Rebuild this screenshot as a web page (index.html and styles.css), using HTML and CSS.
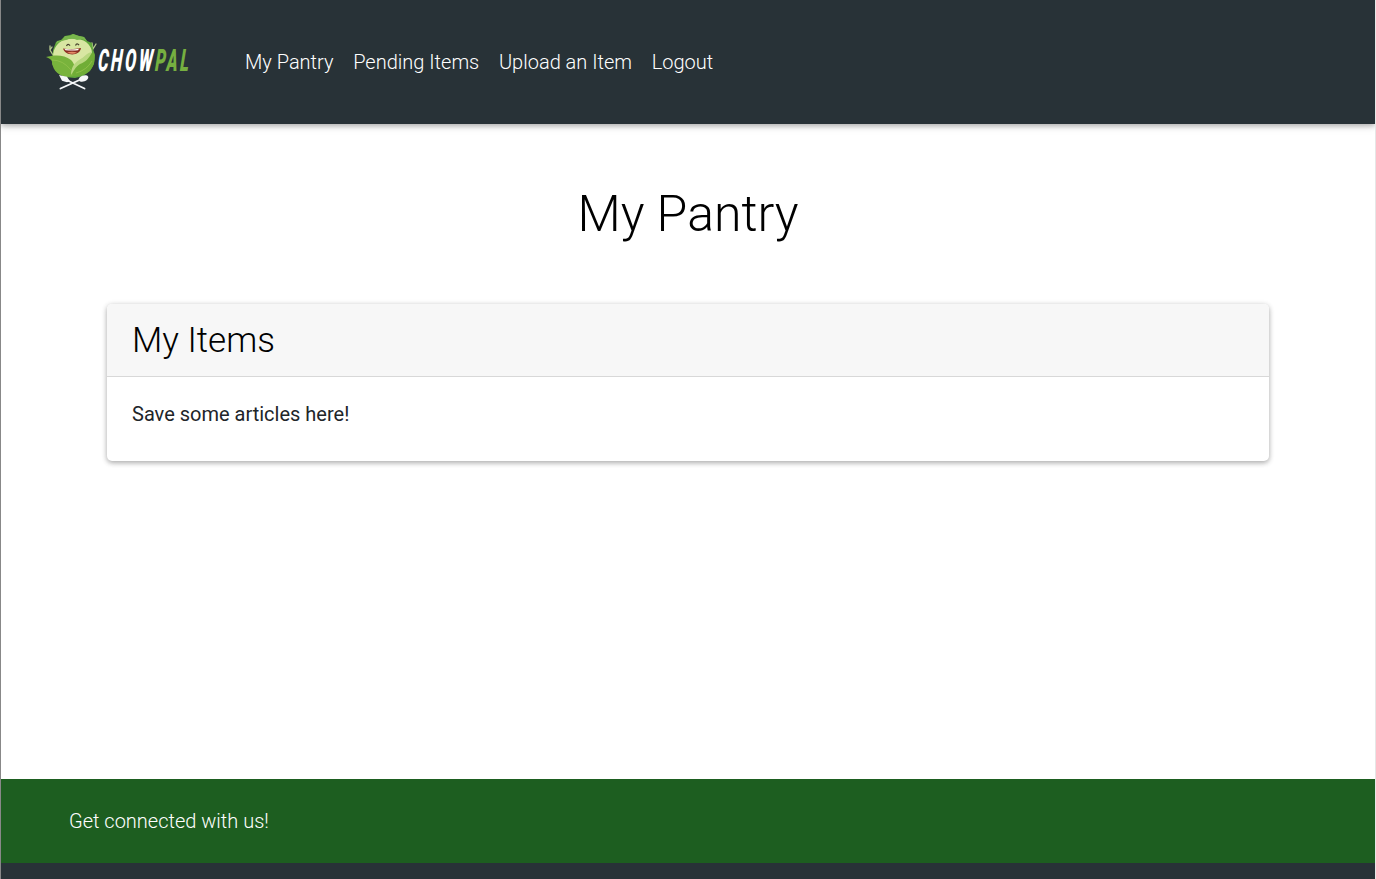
FILE: index.html
```html
<!DOCTYPE html>
<html lang="en">
<head>
<meta charset="utf-8">
<title>ChowPal - My Pantry</title>
<link rel="stylesheet" href="styles.css">
</head>
<body>
<div class="page">
  <header class="navbar">
    <a class="brand" aria-label="ChowPal">
      <svg class="logo" width="150" height="64" viewBox="42 30 150 64">
        <path d="M53 55L50 50L50 46M50 50L52 47M93 49L92 43M93 49L96 44" fill="none" stroke="#b5c98c" stroke-width="1.300" stroke-linecap="round"/>
        <path d="M53 50l3-8 5-2 4-4 5-1 3-1 6 2 5 1 3 4 5 2 1 6 2 6-1 9-4 7-7 5-8 2-10-1-8-5-5-8z" fill="#62a83c"/>
        <path d="M53 57c0-9 5-15 11-17 6-2 17-2 22 2 4 3 6 7 6 11l-10 8-10 8-18-6z" fill="#d8e6a2"/>
        <path d="M56 44l1-3 5-1 3-4 5 0 3-2 6 2 5 1 3 4-5-2-5 1-5-2-6 2-5 1z" fill="#79b64c"/>
        <path d="M46 57c7-2 18-3 25 3 4 4 5 9 2 16-10 3-20-3-21-14 0-2-3-4-6-5z" fill="#78b33c"/>
        <path d="M94 53c3 14-6 24-21 23-1-7 3-13 9-17 4-3 7-6 12-6z" fill="#70ad36"/>
        <path d="M71 75c0-7 3-12 8-15 6-3 7-7 13-8-3 7-7 10-12 12-5 3-6 7-9 11z" fill="#b9d780"/>
        <path d="M52 60q11 0 19 10M76 73q11-3 16-12" fill="none" stroke="#94c34c" stroke-width=".8"/>
        <path d="M63 48.500q9 1.500 18-.5c-1 8-15 9-18 .5z" fill="#8c2d22"/>
        <path d="M64.500 49q8 1 14.500-.3l-1 1.500q-6 .8-12.500 0z" fill="#fff"/>
        <path d="M67 52.500q5-1.500 10 0-4 2.500-10 0z" fill="#e28a66"/>
        <path d="M66.500 46q1.500-3 3.500-.3M75.500 45.500q1.500-3 3.500-.3" fill="none" stroke="#47432e" stroke-width="1.300"/>
        <path d="M60.500 88.500l19-8.500M84.500 88.500l-18-8.500" stroke="#f5f7f8" stroke-width="1.900" stroke-linecap="round"/>
        <ellipse cx="83.500" cy="78.500" rx="5" ry="3" transform="rotate(-20 83.500 78.500)" fill="#f5f7f8"/>
        <path d="M59 75l3 .8 5 1 3 4.500-3 1-5-1.500z" fill="#f5f7f8"/>
        <text class="logo-text" transform="translate(97.500 70.500) skewX(-4) scale(.535 1)"><tspan fill="#fff">CHOW</tspan><tspan fill="#76af40">PAL</tspan></text>
      </svg>
    </a>
    <nav class="links">
      <a>My Pantry</a>
      <a>Pending Items</a>
      <a>Upload an Item</a>
      <a>Logout</a>
    </nav>
  </header>
  <main class="content">
    <h1 class="title">My Pantry</h1>
    <section class="card">
      <h2 class="card-header">My Items</h2>
      <p class="card-body">Save some articles here!</p>
    </section>
  </main>
  <footer class="footer">
    <div class="connect">Get connected with us!</div>
  </footer>
</div>
</body>
</html>
```

FILE: styles.css
```css
* { box-sizing: border-box; }
body {
  margin: 0;
  font-family: Roboto, sans-serif;
  font-size: 20px;
  font-weight: 300;
  line-height: 30px;
  color: #212529;
  background: #fff;
}
.page {
  display: flex;
  flex-direction: column;
  height: 879px;
  overflow: hidden;
  border-left: 1px solid #888;
  border-right: 1px solid #e6e6e6;
}
.navbar {
  display: flex;
  align-items: center;
  height: 124px;
  flex: none;
  padding-left: 41px;
  background: #283237;
  box-shadow: 0 2px 5px rgba(0, 0, 0, .26), 0 2px 10px rgba(0, 0, 0, .1);
}
.brand { display: flex; margin-right: 53px; }
.logo-text {
  font-family: Roboto, sans-serif;
  font-size: 31px;
  font-weight: 900;
  font-style: italic;
  letter-spacing: 4.8px;
}
.links { display: flex; gap: 19.7px; color: #fff; }
.content { flex: 1; padding: 60px 106px 0; }
.title {
  margin: 0 0 60px;
  font-size: 50px;
  font-weight: 300;
  line-height: 60px;
  text-align: center;
  color: #000;
}
.card {
  height: 157px;
  border-radius: 5px;
  overflow: hidden;
  box-shadow: 0 2px 5px rgba(0, 0, 0, .25), 0 1px 6px rgba(0, 0, 0, .12);
}
.card-header {
  margin: 0;
  height: 73px;
  padding: 15px 25px;
  font-size: 35px;
  font-weight: 300;
  line-height: 43px;
  color: #000;
  background: #f7f7f7;
  border-bottom: 1px solid #d8d8d8;
}
.card-body { margin: 0; padding: 22px 25px; font-weight: 400; }
.footer { height: 100px; flex: none; background: #283237; }
.connect {
  height: 84px;
  padding: 27px 68px;
  color: #fff;
  background: #1d5e20;
}
```
